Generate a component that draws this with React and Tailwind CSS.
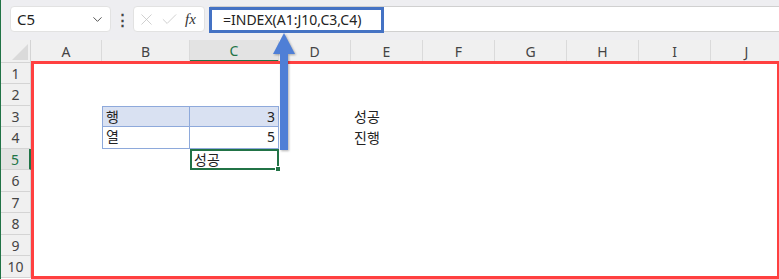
import { ChevronDown, X, Check } from 'lucide-react'

const cols = [
  { name: 'A', w: 71 },
  { name: 'B', w: 88 },
  { name: 'C', w: 89 },
  { name: 'D', w: 72 },
  { name: 'E', w: 72 },
  { name: 'F', w: 72 },
  { name: 'G', w: 72 },
  { name: 'H', w: 72 },
  { name: 'I', w: 72 },
  { name: 'J', w: 72 },
]

const rowHeights = [21, 22, 21, 22, 21, 22, 21, 22, 21, 22]

const font = { fontFamily: '"Noto Sans", "Noto Sans CJK KR", sans-serif' }

function Cell({ r, c }) {
  // 표 영역 B3:C4
  if (r === 3 && c === 'B') return <div className="h-full border border-[#8ea9db] bg-[#d9e1f2] px-[3px] leading-[20px]">행</div>
  if (r === 3 && c === 'C') return <div className="h-full border-y border-r border-[#8ea9db] bg-[#d9e1f2] px-[3px] text-right leading-[20px]">3</div>
  if (r === 4 && c === 'B') return <div className="h-full border-x border-b border-[#8ea9db] px-[3px] leading-[20px]">열</div>
  if (r === 4 && c === 'C') return <div className="h-full border-r border-b border-[#8ea9db] px-[3px] text-right leading-[20px]">5</div>
  if (r === 5 && c === 'C')
    return (
      <div className="relative h-full border-2 border-[#217346] px-[2px] leading-[17px]">
        성공
        <div className="absolute -right-[4px] -bottom-[4px] h-[6px] w-[6px] bg-[#217346] border border-white" />
      </div>
    )
  if (r === 3 && c === 'E') return <div className="h-full px-[3px] leading-[21px]">성공</div>
  if (r === 4 && c === 'E') return <div className="h-full px-[3px] leading-[21px]">진행</div>
  return null
}

export default function App() {
  return (
    <div className="relative w-[779px] h-[279px] overflow-hidden bg-white border-l border-[#217346] text-[#222]" style={font}>
      {/* 상단 이름 상자 + 수식 입력줄 */}
      <div className="flex h-[40px] items-start bg-[#eeeef1] pt-[6px]">
        <div className="ml-[9px] flex h-[26px] w-[101px] shrink-0 items-center justify-between rounded-[4px] border border-[#e2e2e2] bg-white pl-[6px] pr-[5px] text-[15px]">
          <span>C5</span>
          <ChevronDown size={15} strokeWidth={1.6} className="text-[#555]" />
        </div>
        <div className="flex h-[26px] w-[22px] shrink-0 items-center justify-center text-[#444] text-[15px] font-bold">⋮</div>
        <div className="flex h-[26px] w-[72px] shrink-0 items-center gap-[4px] rounded-[4px] border border-[#e2e2e2] bg-white pl-[3px]">
          <X size={19} strokeWidth={1} className="text-[#c4c4c4]" />
          <Check size={19} strokeWidth={1} className="text-[#c4c4c4]" />
          <span className="ml-[2px] text-[15px] italic text-[#333]" style={{ fontFamily: '"Liberation Serif", serif' }}>fx</span>
        </div>
        <div className="ml-[5px] flex h-[26px] flex-1 items-center border-y border-[#d0d0d0] bg-white pl-[13px] text-[14px]">
          =INDEX(A1:J10,C3,C4)
        </div>
      </div>

      {/* 열 머리글 */}
      <div className="flex h-[23px] bg-[#f0f0f0] text-[14px] text-[#444] border-b border-[#d4d4d4]">
        <div className="relative w-[30px] shrink-0 border-r border-[#d4d4d4]">
          <svg className="absolute right-[2px] bottom-[2px]" width="16" height="16"><polygon points="16,0 16,16 0,16" fill="#dadada" /></svg>
        </div>
        {cols.map((c) => (
          <div
            key={c.name}
            className={`flex shrink-0 items-center justify-center border-r border-[#dadada] ${c.name === 'C' ? 'bg-[#e3e3e3] text-[#217346] border-b-2 border-b-[#217346]' : ''}`}
            style={{ width: c.w }}
          >
            {c.name}
          </div>
        ))}
      </div>

      {/* 행 */}
      {rowHeights.map((h, i) => {
        const r = i + 1
        return (
          <div key={r} className="flex text-[14px]" style={{ height: h }}>
            <div className={`flex w-[30px] shrink-0 items-center justify-center border-b border-r border-[#d4d4d4] text-[#444] ${r === 5 ? 'bg-[#e3e3e3] text-[#217346] border-r-2 border-r-[#217346]' : 'bg-[#f0f0f0]'}`}>
              {r}
            </div>
            {cols.map((c) => (
              <div key={c.name} className="shrink-0" style={{ width: c.w }}>
                <Cell r={r} c={c.name} />
              </div>
            ))}
          </div>
        )
      })}

      {/* 수식 강조 상자 */}
      <div className="absolute left-[208px] top-[7px] h-[26px] w-[175px] border-[3px] border-[#4472c4]" />

      {/* 빨간 범위 상자 */}
      <div className="absolute left-[30px] top-[61px] h-[218px] w-[749px] border-[3px] border-[#ff4040]" />

      {/* 파란 화살표 */}
      <svg className="absolute left-[272px] top-[32px]" width="24" height="122" style={{ filter: 'drop-shadow(1px 1px 1px rgba(0,0,0,0.3))' }}>
        <polygon points="11,1 0,22 22,22" fill="#4f7fd6" />
        <rect x="7" y="21" width="8" height="97" fill="#4f7fd6" />
      </svg>
    </div>
  )
}
